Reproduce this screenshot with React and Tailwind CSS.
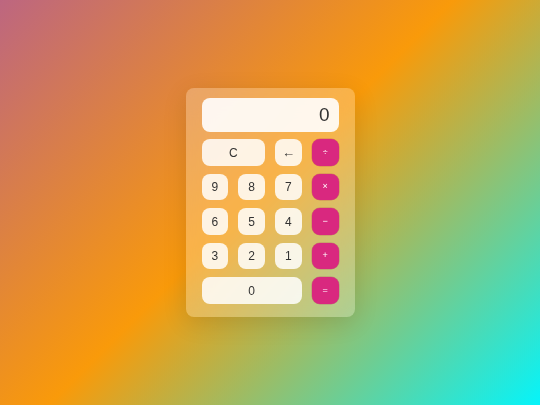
import React, { useState } from 'react';

const keys = [
  { label: 'C', span: 'col-span-2', kind: 'num' },
  { label: '←', kind: 'num', size: 'text-[13px]' },
  { label: '÷', kind: 'op' },
  { label: '9', kind: 'num' },
  { label: '8', kind: 'num' },
  { label: '7', kind: 'num' },
  { label: '×', kind: 'op' },
  { label: '6', kind: 'num' },
  { label: '5', kind: 'num' },
  { label: '4', kind: 'num' },
  { label: '−', kind: 'op' },
  { label: '3', kind: 'num' },
  { label: '2', kind: 'num' },
  { label: '1', kind: 'num' },
  { label: '+', kind: 'op' },
  { label: '0', span: 'col-span-3', kind: 'num' },
  { label: '=', kind: 'op' },
];

const App = () => {
  const [display] = useState('0');

  return (
    <div className="min-h-screen w-full flex items-center justify-center bg-[linear-gradient(135deg,#bd6680_0%,#f99a0a_48%,#05f4fa_100%)] font-['Liberation_Sans',Arial,sans-serif]">
      {/* calculator card */}
      <div className="w-[169px] rounded-lg bg-white/25 backdrop-blur-md shadow-[0_6px_24px_rgba(0,0,0,0.12)] pt-[10px] px-[16px] pb-[13px]">
        <div className="h-[34px] rounded-lg bg-white/90 flex items-center justify-end pr-[9px] text-[19px] text-[#333]">
          {display}
        </div>

        <div className="mt-[7px] grid grid-cols-4 gap-x-[10px] gap-y-[8px]">
          {keys.map((k, i) => (
            <button
              key={i}
              className={`h-[26.5px] rounded-lg flex items-center justify-center ${k.span || ''} ${
                k.kind === 'op'
                  ? 'bg-[#d9287f] text-white text-[9px] shadow-[0_0_0_0.5px_rgba(160,20,80,0.35)]'
                  : `bg-white/85 text-[#333] ${k.size || 'text-[12px]'}`
              }`}
            >
              {k.label}
            </button>
          ))}
        </div>
      </div>
    </div>
  );
};

export default App;
